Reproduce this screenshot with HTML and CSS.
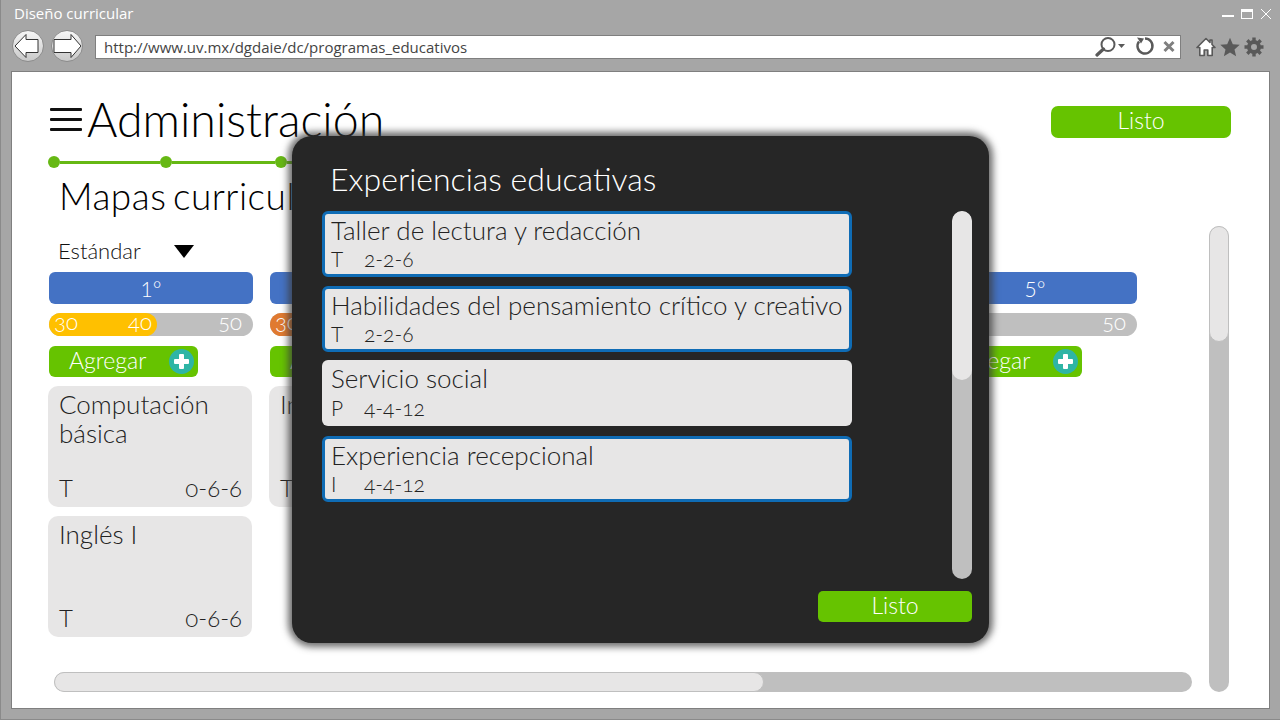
FILE: index.html
```html
<!DOCTYPE html>
<html lang="es">
<head>
<meta charset="utf-8">
<title>Diseño curricular</title>
<link rel="stylesheet" href="styles.css">
</head>
<body>
<div class="window">
  <div class="titlebar">
    <span class="wintitle">Diseño curricular</span>
    <div class="winctl">
      <svg width="50" height="14" viewBox="0 0 50 14"><rect x="1" y="8" width="12" height="2" fill="#fff"/><rect x="20.500" y="2.500" width="11" height="9" fill="none" stroke="#fff" stroke-width="1"/><rect x="20" y="2" width="12" height="3" fill="#fff"/><path d="M40 2l10 10M50 2 40 12" stroke="#fff" stroke-width="1" fill="none"/></svg>
    </div>
  </div>
  <div class="toolbar">
    <div class="navbtn"><svg width="30" height="30" viewBox="0 0 30 30"><path d="M2 15 13 3.500v5h12v13H13v5z" fill="#fff" stroke="#333" stroke-width="1"/></svg></div>
    <div class="navbtn"><svg width="30" height="30" viewBox="0 0 30 30"><path d="M29 15 19 3.500v5H2v13h17v5z" fill="#fff" stroke="#333" stroke-width="1"/></svg></div>
    <div class="address">
      <span class="url">http://www.uv.mx/dgdaie/dc/programas_educativos</span>
      <svg class="addr-icons" width="83" height="22" viewBox="0 0 83 22">
        <circle cx="13" cy="8.500" r="6.500" fill="none" stroke="#595959" stroke-width="2"/>
        <path d="M8.500 13 2 19" stroke="#595959" stroke-width="3.200" stroke-linecap="round"/>
        <path d="M23 8h7l-3.500 4z" fill="#595959"/>
        <path d="M50 2.500a7.500 7.500 0 1 1-6 3" fill="none" stroke="#595959" stroke-width="2.400"/>
        <path d="M42 1.500 49 2.500l-3 5z" fill="#595959"/>
        <path d="M69.500 6l9 9M78.500 6l-9 9" stroke="#7f7f7f" stroke-width="3"/>
      </svg>
    </div>
    <div class="tools">
      <svg width="20" height="20" viewBox="0 0 20 20"><path d="M10 1.500 1 10.500h2.800V18.500h4.400v-5.500h3.600v5.500h4.400v-8H19l-3-3V3h-2v2.500z" fill="#fff" stroke="#595959" stroke-width="1.600" stroke-linejoin="round"/></svg>
      <svg width="20" height="20" viewBox="0 0 20 20"><path d="M10 .8l2.800 6.400 6.900.6-5.200 4.600 1.600 6.800-6.100-3.600-6.100 3.600 1.600-6.800L.3 7.800l6.900-.6z" fill="#595959"/></svg>
      <svg width="20" height="20" viewBox="0 0 20 20"><circle cx="10" cy="10" r="5" fill="none" stroke="#595959" stroke-width="4"/><g stroke="#595959" stroke-width="3.400"><path d="M10 .5v4M10 15.500v4M.5 10h4M15.500 10h4M3.300 3.300l2.800 2.800M13.900 13.900l2.800 2.800M16.700 3.300l-2.800 2.800M6.100 13.900l-2.800 2.800"/></g></svg>
    </div>
  </div>
  <main class="page">
    <div class="head">
      <div class="head-left">
        <div class="burger"><i></i><i></i><i></i></div>
        <h1 class="title">Administración</h1>
      </div>
      <button class="btn-listo">Listo</button>
    </div>
    <div class="stepper">
      <i class="dot"></i><i class="line"></i><i class="dot"></i><i class="line wide"></i><i class="dot"></i><i class="line"></i>
    </div>
    <h2 class="subtitle">Mapas curriculares</h2>
    <div class="select"><span>Estándar</span><i class="tri"></i></div>
    <div class="columns">
      <section class="col">
        <div class="sem">1°</div>
        <div class="credits"><div class="fill yellow"></div><span>30</span><span class="mid">40</span><span class="end">50</span></div>
        <button class="add">Agregar<b class="plus"></b></button>
        <article class="card"><p>Computación básica</p><div class="meta"><span>T</span><span>0-6-6</span></div></article>
        <article class="card"><p>Inglés I</p><div class="meta"><span>T</span><span>0-6-6</span></div></article>
      </section>
      <section class="col">
        <div class="sem"></div>
        <div class="credits"><div class="fill orange"></div><span>30</span></div>
        <button class="add">Agregar<b class="plus"></b></button>
        <article class="card"><p>Inglés II</p><div class="meta"><span>T</span></div></article>
      </section>
      <section class="col col-last">
        <div class="sem">5°</div>
        <div class="credits"><span class="end">50</span></div>
        <button class="add">Agregar<b class="plus"></b></button>
      </section>
    </div>
    <div class="vscroll"><div class="vthumb"></div></div>
    <div class="hscroll"><div class="hthumb"></div></div>
  </main>
  <div class="modal">
    <h3 class="modal-title">Experiencias educativas</h3>
    <div class="modal-body">
      <div class="list">
        <div class="item sel"><div class="name">Taller de lectura y redacción</div><div class="code"><span class="kind">T</span><span>2-2-6</span></div></div>
        <div class="item sel"><div class="name">Habilidades del pensamiento crítico y creativo</div><div class="code"><span class="kind">T</span><span>2-2-6</span></div></div>
        <div class="item plain"><div class="name">Servicio social</div><div class="code"><span class="kind">P</span><span>4-4-12</span></div></div>
        <div class="item sel"><div class="name">Experiencia recepcional</div><div class="code"><span class="kind">I</span><span>4-4-12</span></div></div>
      </div>
      <div class="mscroll"><div class="mthumb"></div></div>
    </div>
    <div class="modal-foot"><button class="btn-modal">Listo</button></div>
  </div>
</div>
</body>
</html>
```
FILE: styles.css
```css
* { box-sizing: border-box; }
html, body { margin: 0; padding: 0; width: 1280px; height: 720px; overflow: hidden; }
body { font-family: "Lato", "Open Sans", sans-serif; font-weight: 300; color: #1a1a1a; }
.window { position: relative; width: 1280px; height: 720px; background: #a6a6a6; padding: 0 10px 10px 10px; display: flex; flex-direction: column; border-left: 1px solid #8a8a8a; border-bottom: 1px solid #8a8a8a; }
.titlebar { height: 28px; display: flex; align-items: center; justify-content: space-between; flex: none; }
.wintitle { font-family: "Open Sans", sans-serif; font-weight: 400; font-size: 15px; line-height: 26px; color: #fff; margin: -2px 0 0 3px; }
.winctl { margin-right: -1px; height: 14px; }
.winctl svg { display: block; }
.toolbar { height: 43px; flex: none; display: flex; align-items: center; padding-bottom: 7px; }
.navbtn { width: 32px; height: 32px; border-radius: 50%; background: linear-gradient(#f6f6f6, #c9c9c9); border: 1px solid #8c8c8c; display: flex; align-items: center; justify-content: center; margin-right: 7px; }
.navbtn:first-child { margin-left: 1px; }
.navbtn:nth-child(2) { margin-right: 12px; }
.address { width: 1086px; height: 24px; margin-top: 2px; background: #fff; border: 1px solid #7f7f7f; display: flex; align-items: center; justify-content: space-between; padding: 0 2px 0 8px; }
.url { font-family: "Open Sans", sans-serif; font-weight: 400; font-size: 15px; color: #444; }
.addr-icons { display: block; }
.tools { display: flex; gap: 4px; margin: 1px 0 0 15px; }
.tools svg { display: block; }
.page { position: relative; flex: 1; background: #fff; border: 1px solid #7f7f7f; padding: 28px 38px 0 37px; overflow: hidden; }
.head { display: flex; justify-content: space-between; align-items: flex-start; height: 53px; }
.head-left { display: flex; align-items: center; gap: 5px; }
.burger { width: 32px; margin-left: 1px; display: flex; flex-direction: column; gap: 7px; }
.burger i { display: block; height: 3px; background: #111; border-radius: 1px; }
.title { margin: 0; font-size: 46.500px; line-height: 38px; font-weight: 300; color: #000; white-space: nowrap; }
.btn-listo { width: 180px; height: 32px; margin-top: 6px; padding: 0 0 4px; border: 0; border-radius: 7px; background: #66c300; color: #fff; font: 300 23px "Lato", sans-serif; }
.stepper { display: flex; align-items: center; margin: 3px 0 0 -1px; height: 12px; }
.dot { width: 12px; height: 12px; border-radius: 50%; background: #66b814; flex: none; }
.line { width: 100px; height: 3px; background: #66b814; flex: none; }
.line.wide { width: 103px; }
.subtitle { margin: 5px 0 0 10px; font-size: 37px; line-height: 46px; font-weight: 300; letter-spacing: .5px; word-spacing: -4px; color: #000; white-space: nowrap; }
.select { display: flex; align-items: center; margin: 18px 0 0 9px; font-size: 22px; line-height: 28px; color: #111; }
.tri { margin-left: 33px; border-left: 10.500px solid transparent; border-right: 10.500px solid transparent; border-top: 13px solid #000; }
.columns { display: grid; grid-template-columns: repeat(5, 204px); column-gap: 17px; margin: 7px 0 0 0; }
.col { display: flex; flex-direction: column; align-items: flex-start; }
.col-last { grid-column: 5; }
.sem { width: 100%; height: 32px; border-radius: 6px; background: #4472c4; color: #fff; text-align: center; font-size: 21px; line-height: 34px; }
.credits { position: relative; width: 100%; height: 23px; margin-top: 9px; border-radius: 12px; background: #bfbfbf; color: #fff; font-size: 22px; line-height: 18px; display: flex; padding-left: 5px; font-variant-numeric: oldstyle-nums; }
.credits span { position: relative; }
.credits .mid { position: absolute; left: 79px; }
.credits .end { position: absolute; right: 11px; }
.fill { position: absolute; left: 0; top: 0; bottom: 0; width: 108px; border-radius: 12px; }
.yellow { background: #ffc000; }
.orange { background: #e07a30; }
.add { display: flex; align-items: center; justify-content: space-between; width: 149px; height: 31px; margin-top: 10px; padding: 0 4px 4px 20px; border: 0; border-radius: 6px; background: #66c300; color: #fff; font: 300 23px "Lato", sans-serif; line-height: 26px; }
.plus { position: relative; display: block; width: 25px; height: 25px; margin-bottom: -4px; border-radius: 50%; background: #2eb5a5; }
.plus::before, .plus::after { content: ""; position: absolute; background: #fff; border-radius: 1px; }
.plus::before { left: 5px; right: 5px; top: 10px; height: 5px; }
.plus::after { top: 5px; bottom: 5px; left: 10px; width: 5px; }
.card { width: 204px; height: 121px; margin: 9px 0 0 -1px; background: #e7e6e6; border-radius: 10px; padding: 4px 10px 5px 11px; display: flex; flex-direction: column; justify-content: space-between; font-size: 26px; color: #222; }
.card p { margin: 0; line-height: 29px; }
.meta { display: flex; justify-content: space-between; font-size: 24px; line-height: 28px; font-variant-numeric: oldstyle-nums; }
.vscroll { position: absolute; left: 1197px; top: 154px; width: 20px; height: 466px; border-radius: 10px; background: #bfbfbf; overflow: hidden; }
.vthumb { height: 116px; background: #e7e6e6; border: 1px solid #bfbfbf; border-radius: 10px; }
.hscroll { position: absolute; left: 42px; top: 600px; width: 1138px; height: 20px; border-radius: 10px; background: #bfbfbf; overflow: hidden; }
.hthumb { width: 710px; height: 20px; background: #e7e6e6; border: 1px solid #bfbfbf; border-radius: 10px; }
.modal { position: absolute; left: 291px; top: 136px; width: 697px; height: 507px; background: #262626; border-radius: 20px; box-shadow: 0 0 7px 4px rgba(60,60,60,.75); padding: 22px 17px 21px 30px; display: flex; flex-direction: column; color: #fff; }
.modal-title { margin: 0 0 0 8px; font-size: 32px; line-height: 42px; font-weight: 300; color: #fff; }
.modal-body { display: flex; justify-content: space-between; margin-top: 11px; height: 368px; }
.list { width: 530px; display: flex; flex-direction: column; gap: 9px; }
.item { height: 66px; flex: none; background: #e7e6e6; border-radius: 6px; padding: 2px 9px; color: #222; }
.item.sel { border: 3px solid #0f6cb5; padding: 0 6px; }
.item.plain { margin: -1px 0 1px; }
.item.plain .code { margin-top: 1px; }
.name { font-size: 26px; line-height: 32px; white-space: nowrap; }
.code { display: flex; font-size: 21px; line-height: 26px; font-variant-numeric: oldstyle-nums; }
.kind { width: 33px; }
.mscroll { width: 20px; height: 368px; border-radius: 10px; background: #bfbfbf; overflow: hidden; }
.mthumb { height: 169px; background: #e7e6e6; border-radius: 10px; }
.modal-foot { display: flex; justify-content: flex-end; margin-top: 12px; }
.btn-modal { width: 154px; height: 31px; padding: 0 0 3px; border: 0; border-radius: 5px; background: #66c300; color: #fff; font: 300 23px "Lato", sans-serif; }
```
